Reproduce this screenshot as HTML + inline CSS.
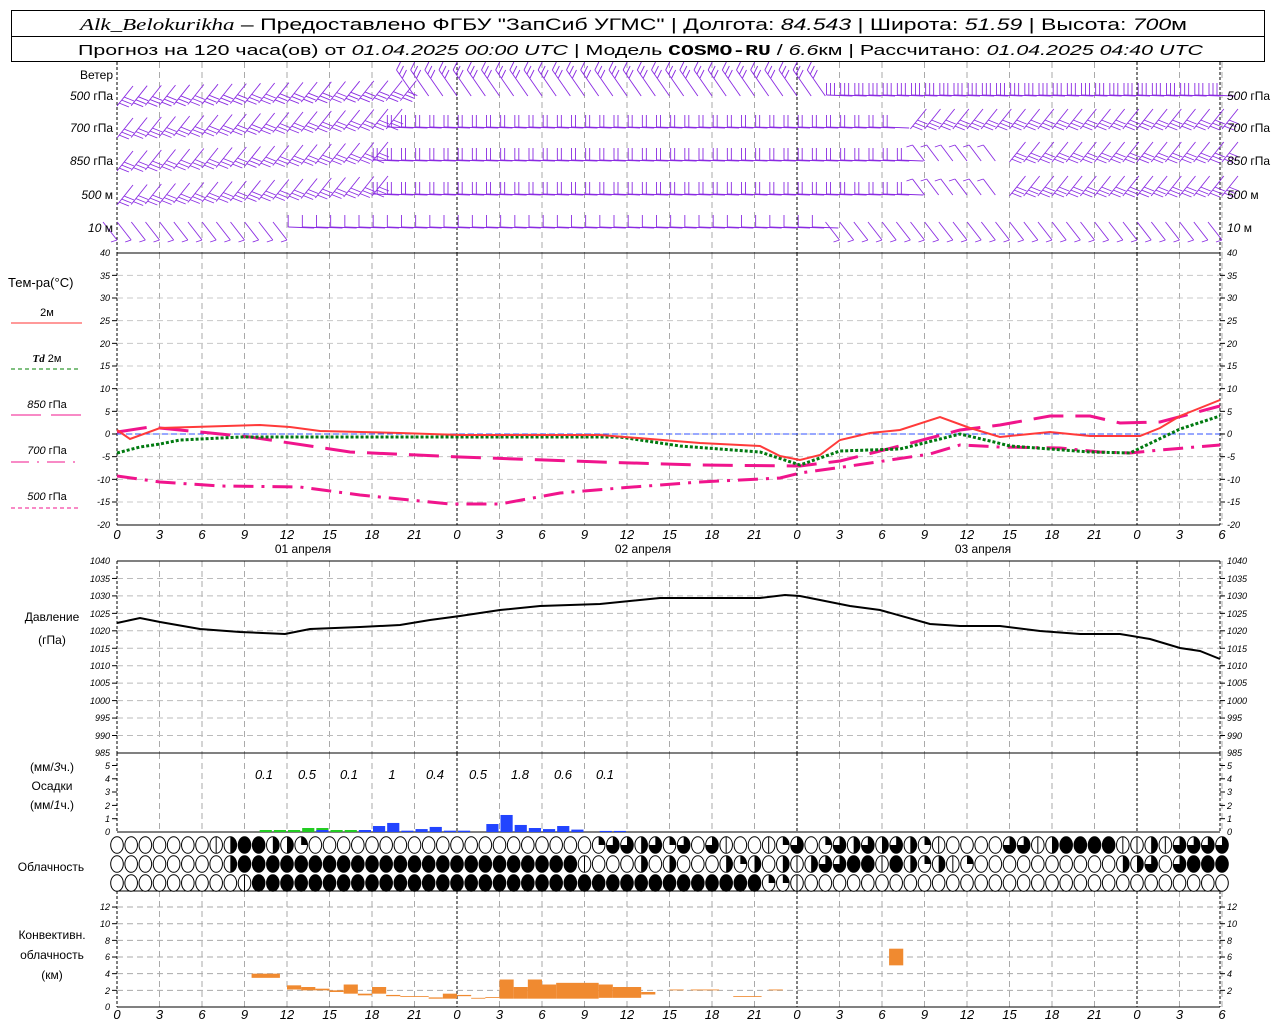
<!DOCTYPE html>
<html><head><meta charset="utf-8">
<style>
html,body{margin:0;padding:0;background:#fff;}
svg{display:block;font-family:"Liberation Sans","DejaVu Sans",sans-serif;}
.ax{font-size:9px;font-style:italic;fill:#000;}
.lb{font-size:12px;fill:#000;}
.xl{font-size:13px;font-style:italic;fill:#000;}
</style></head><body>
<svg id="s" width="1280" height="1024" viewBox="0 0 1280 1024" xmlns="http://www.w3.org/2000/svg">
<rect x="0" y="0" width="1280" height="1024" fill="#fff"/>
<g id="grid"></g>
<g id="wind" stroke="#8a2be2" stroke-width="0.9" fill="none"></g>
<!-- header -->
<rect x="11.5" y="10.5" width="1253" height="51" fill="none" stroke="#000"/>
<line x1="11" y1="36.5" x2="1265" y2="36.5" stroke="#000"/>
<text x="80" y="30" font-size="17" textLength="1107" lengthAdjust="spacingAndGlyphs"><tspan font-family="Liberation Serif" font-style="italic">Alk_Belokurikha</tspan> – Предоставлено ФГБУ "ЗапСиб УГМС" | Долгота: <tspan font-style="italic">84.543</tspan> | Широта: <tspan font-style="italic">51.59</tspan> | Высота: <tspan font-style="italic">700</tspan>м</text>
<text x="78" y="55" font-size="15" textLength="1125" lengthAdjust="spacingAndGlyphs">Прогноз на 120 часа(ов) от <tspan font-style="italic">01.04.2025 00:00 UTC</tspan> | Модель <tspan font-family="Liberation Mono" font-weight="bold">COSMO-RU</tspan> / <tspan font-style="italic">6.6</tspan>км | Рассчитано: <tspan font-style="italic">01.04.2025 04:40 UTC</tspan></text>

<!-- wind labels -->
<g class="lb" font-size="11">
<text x="113" y="79" text-anchor="end">Ветер</text>
<text x="113" y="100" text-anchor="end"><tspan font-style="italic">500</tspan> гПа</text>
<text x="113" y="132" text-anchor="end"><tspan font-style="italic">700</tspan> гПа</text>
<text x="113" y="165" text-anchor="end"><tspan font-style="italic">850</tspan> гПа</text>
<text x="113" y="199" text-anchor="end"><tspan font-style="italic">500</tspan> м</text>
<text x="113" y="232" text-anchor="end"><tspan font-style="italic">10</tspan>   м</text>
<text x="1227" y="100"><tspan font-style="italic">500</tspan> гПа</text>
<text x="1227" y="132"><tspan font-style="italic">700</tspan> гПа</text>
<text x="1227" y="165"><tspan font-style="italic">850</tspan> гПа</text>
<text x="1227" y="199"><tspan font-style="italic">500</tspan> м</text>
<text x="1227" y="232"><tspan font-style="italic">10</tspan>   м</text>
</g>

<!-- temp legend -->
<g class="lb">
<text x="8" y="287" font-size="13">Тем-ра(°C)</text>
<text x="47" y="316" text-anchor="middle" font-size="11">2м</text>
<line x1="11" y1="323" x2="82" y2="323" stroke="#ff3333" stroke-width="1"/>
<text x="47" y="362" text-anchor="middle" font-size="11"><tspan font-family="Liberation Serif" font-style="italic" font-weight="bold">Td</tspan>  2м</text>
<line x1="11" y1="369" x2="78" y2="369" stroke="#008000" stroke-dasharray="4,3"/>
<text x="47" y="408" text-anchor="middle" font-size="11"><tspan font-style="italic">850</tspan> гПа</text>
<line x1="11" y1="415" x2="82" y2="415" stroke="#f0148c" stroke-dasharray="30,10"/>
<text x="47" y="454" text-anchor="middle" font-size="11"><tspan font-style="italic">700</tspan> гПа</text>
<line x1="11" y1="462" x2="78" y2="462" stroke="#f0148c" stroke-dasharray="18,8,2,8"/>
<text x="47" y="500" text-anchor="middle" font-size="11"><tspan font-style="italic">500</tspan> гПа</text>
<line x1="11" y1="508" x2="78" y2="508" stroke="#f0148c" stroke-dasharray="4,3"/>
<text x="52" y="621" text-anchor="middle">Давление</text>
<text x="52" y="644" text-anchor="middle">(гПа)</text>
<text x="52" y="771" text-anchor="middle">(мм/<tspan font-style="italic">3</tspan>ч.)</text>
<text x="52" y="790" text-anchor="middle">Осадки</text>
<text x="52" y="809" text-anchor="middle">(мм/<tspan font-style="italic">1</tspan>ч.)</text>
<text x="51" y="871" text-anchor="middle">Облачность</text>
<text x="52" y="939" text-anchor="middle">Конвективн.</text>
<text x="52" y="959" text-anchor="middle">облачность</text>
<text x="52" y="979" text-anchor="middle">(км)</text>
</g>

<!-- axis labels -->
<g class="ax" text-anchor="end">
<text x="110" y="256">40</text><text x="110" y="279">35</text><text x="110" y="301">30</text><text x="110" y="324">25</text><text x="110" y="347">20</text><text x="110" y="369">15</text><text x="110" y="392">10</text><text x="110" y="415">5</text><text x="110" y="437">0</text><text x="110" y="460">-5</text><text x="110" y="483">-10</text><text x="110" y="505">-15</text><text x="110" y="528">-20</text>
<text x="110" y="564">1040</text><text x="110" y="582">1035</text><text x="110" y="599">1030</text><text x="110" y="617">1025</text><text x="110" y="634">1020</text><text x="110" y="652">1015</text><text x="110" y="669">1010</text><text x="110" y="686">1005</text><text x="110" y="704">1000</text><text x="110" y="721">995</text><text x="110" y="739">990</text><text x="110" y="756">985</text>
<text x="110" y="769">5</text><text x="110" y="782">4</text><text x="110" y="795">3</text><text x="110" y="809">2</text><text x="110" y="822">1</text><text x="110" y="835">0</text>
<text x="110" y="910">12</text><text x="110" y="927">10</text><text x="110" y="944">8</text><text x="110" y="960">6</text><text x="110" y="977">4</text><text x="110" y="994">2</text><text x="110" y="1010">0</text>
</g>
<g class="ax">
<text x="1227" y="256">40</text><text x="1227" y="279">35</text><text x="1227" y="301">30</text><text x="1227" y="324">25</text><text x="1227" y="347">20</text><text x="1227" y="369">15</text><text x="1227" y="392">10</text><text x="1227" y="415">5</text><text x="1227" y="437">0</text><text x="1227" y="460">-5</text><text x="1227" y="483">-10</text><text x="1227" y="505">-15</text><text x="1227" y="528">-20</text>
<text x="1227" y="564">1040</text><text x="1227" y="582">1035</text><text x="1227" y="599">1030</text><text x="1227" y="617">1025</text><text x="1227" y="634">1020</text><text x="1227" y="652">1015</text><text x="1227" y="669">1010</text><text x="1227" y="686">1005</text><text x="1227" y="704">1000</text><text x="1227" y="721">995</text><text x="1227" y="739">990</text><text x="1227" y="756">985</text>
<text x="1227" y="769">5</text><text x="1227" y="782">4</text><text x="1227" y="795">3</text><text x="1227" y="809">2</text><text x="1227" y="822">1</text><text x="1227" y="835">0</text>
<text x="1227" y="910">12</text><text x="1227" y="927">10</text><text x="1227" y="944">8</text><text x="1227" y="960">6</text><text x="1227" y="977">4</text><text x="1227" y="994">2</text>
</g>

<!-- x labels -->
<g class="xl" text-anchor="middle">
<text y="539"><tspan x="117">0</tspan><tspan x="159.5">3</tspan><tspan x="202">6</tspan><tspan x="244.5">9</tspan><tspan x="287">12</tspan><tspan x="329.5">15</tspan><tspan x="372">18</tspan><tspan x="414.5">21</tspan><tspan x="457">0</tspan><tspan x="499.5">3</tspan><tspan x="542">6</tspan><tspan x="584.5">9</tspan><tspan x="627">12</tspan><tspan x="669.5">15</tspan><tspan x="712">18</tspan><tspan x="754.5">21</tspan><tspan x="797">0</tspan><tspan x="839.5">3</tspan><tspan x="882">6</tspan><tspan x="924.5">9</tspan><tspan x="967">12</tspan><tspan x="1009.5">15</tspan><tspan x="1052">18</tspan><tspan x="1094.5">21</tspan><tspan x="1137">0</tspan><tspan x="1179.5">3</tspan><tspan x="1222">6</tspan></text>
<text y="1019"><tspan x="117">0</tspan><tspan x="159.5">3</tspan><tspan x="202">6</tspan><tspan x="244.5">9</tspan><tspan x="287">12</tspan><tspan x="329.5">15</tspan><tspan x="372">18</tspan><tspan x="414.5">21</tspan><tspan x="457">0</tspan><tspan x="499.5">3</tspan><tspan x="542">6</tspan><tspan x="584.5">9</tspan><tspan x="627">12</tspan><tspan x="669.5">15</tspan><tspan x="712">18</tspan><tspan x="754.5">21</tspan><tspan x="797">0</tspan><tspan x="839.5">3</tspan><tspan x="882">6</tspan><tspan x="924.5">9</tspan><tspan x="967">12</tspan><tspan x="1009.5">15</tspan><tspan x="1052">18</tspan><tspan x="1094.5">21</tspan><tspan x="1137">0</tspan><tspan x="1179.5">3</tspan><tspan x="1222">6</tspan></text>
</g>
<g class="lb" text-anchor="middle">
<text x="303" y="553">01 апреля</text><text x="643" y="553">02 апреля</text><text x="983" y="553">03 апреля</text>
</g>
<!-- precip numbers -->
<g font-size="13" font-style="italic" text-anchor="middle">
<text x="264" y="779">0.1</text><text x="307" y="779">0.5</text><text x="349" y="779">0.1</text><text x="392" y="779">1</text><text x="435" y="779">0.4</text><text x="478" y="779">0.5</text><text x="520" y="779">1.8</text><text x="563" y="779">0.6</text><text x="605" y="779">0.1</text>
</g>

<!-- temperature curves -->
<line x1="117" y1="434" x2="1220" y2="434" stroke="#3050ff" stroke-width="1" stroke-dasharray="6,3"/>
<polyline fill="none" stroke="#f0148c" stroke-width="3" stroke-dasharray="20,8,3,8" points="117,476 160,482 220,486 300,487 360,495 450,504 500,504 560,493 620,488 700,482 780,478 800,473 850,466 930,454 960,445 1000,447 1060,448 1100,452 1130,453 1160,450 1220,445"/>
<polyline fill="none" stroke="#f0148c" stroke-width="3" stroke-dasharray="30,12" points="117,432 150,427 250,437 350,452 460,457 600,462 700,465 800,466 840,461 880,451 930,438 960,430 1000,425 1050,416 1090,416 1120,423 1160,422 1220,406"/>
<polyline fill="none" stroke="#007a10" stroke-width="3" stroke-dasharray="3,2" points="117,453 140,447 160,444 180,440 240,437 460,437 620,437 680,446 760,452 800,465 840,451 900,449 960,434 990,441 1010,446 1090,452 1130,453 1180,429 1220,416"/>
<polyline fill="none" stroke="#ff3a3a" stroke-width="2" points="117,430 130,439 160,428 260,425 290,427 320,431 400,433 460,435 600,435 700,443 760,446 780,456 800,460 820,455 840,440 870,433 900,430 940,417 970,428 1000,437 1050,432 1090,436 1140,436 1160,428 1180,416 1220,400"/>
<!-- pressure -->
<polyline fill="none" stroke="#000" stroke-width="2" points="117,623 140,618 160,622 200,629 240,632 285,634 310,629 360,627 400,625 430,620 460,616 500,610 540,606 600,604 660,598 700,598 760,598 785,595 800,596 850,606 880,610 930,624 960,626 1000,626 1040,631 1080,634 1120,634 1150,639 1180,648 1200,651 1220,659"/>
<g id="bars"></g>
<g id="clouds"></g>
</svg>
<script>
(function(){
var NS="http://www.w3.org/2000/svg";
function el(p,t,a){var e=document.createElementNS(NS,t);for(var k in a)e.setAttribute(k,a[k]);p.appendChild(e);return e;}
var g=document.getElementById('grid');
var X=function(h){return 117+h*340/24;};
var panels=[[62,253],[253,525],[561,753],[753,832],[891,1007]];
for(var i=0;i<=26;i++){var x=X(i*3);var day=(i%8==0);
 panels.forEach(function(p){el(g,'line',{x1:x,y1:p[0],x2:x,y2:p[1],stroke:day?'#000':'#aaa','stroke-dasharray':day?'3,2':'6,4','stroke-width':1});});}
panels.forEach(function(p){el(g,'line',{x1:1220,y1:p[0],x2:1220,y2:p[1],stroke:'#000','stroke-dasharray':'3,2'});});
function hg(ys,c){ys.forEach(function(y){el(g,'line',{x1:117,y1:y,x2:1220,y2:y,stroke:c,'stroke-dasharray':'6,4'});
 el(g,'line',{x1:112,y1:y,x2:117,y2:y,stroke:'#000'});el(g,'line',{x1:1220,y1:y,x2:1225,y2:y,stroke:'#000'});});}
var t=[];for(var v=35;v>=-15;v-=5)t.push(434-v*4.533);hg(t,'#c8c8c8');
var pr=[];for(var p=1035;p>=990;p-=5)pr.push(561+(1040-p)*3.49);hg(pr,'#bbb');
var cv=[];for(var k=2;k<=12;k+=2)cv.push(1007-k*8.33);hg(cv,'#aaa');
[765.5,778.8,792,805.4,818.7].forEach(function(y){el(g,'line',{x1:112,y1:y,x2:117,y2:y,stroke:'#000'});el(g,'line',{x1:1220,y1:y,x2:1225,y2:y,stroke:'#000'});});
[253,525,561,753,832,891,1007].forEach(function(y){el(g,'line',{x1:117,y1:y,x2:1220,y2:y,stroke:'#000','stroke-width':1});});
var b=document.getElementById('bars');
var pb={10:[.15,0],11:[.15,0],12:[.15,0],13:[.3,0],14:[.3,.15],15:[.15,0],16:[.15,0],17:[0,.15],18:[0,.45],19:[0,.68],20:[0,.1],21:[0,.22],22:[0,.38],23:[0,.1],24:[0,.1],26:[0,.6],27:[0,1.28],28:[0,.53],29:[0,.3],30:[0,.22],31:[0,.45],32:[0,.18],34:[0,.08],35:[0,.08]};
for(var h in pb){var x0=X(+h)+1,w=340/24-2;var gr=pb[h][0],bl=pb[h][1];
 if(gr>0)el(b,'rect',{x:x0,y:832-gr*13.3,width:w,height:gr*13.3,fill:'#22cc22'});
 if(bl>0)el(b,'rect',{x:x0,y:832-bl*13.3,width:w,height:bl*13.3,fill:'#2244ff'});}
var cb=[[9.5,11.5,3.5,4],[12,13,2.1,2.6],[13,14,2,2.4],[14,15,2,2.2],[15,16,1.8,2],[16,17,1.6,2.7],[17,18,1.4,1.6],[18,19,1.6,2.4],[19,20,1.3,1.45],[20,22,1.2,1.3],[22,23,1,1.15],[23,24,1,1.6],[24,25,1.3,1.45],[25,26,1,1.1],[26,27,1.1,1.2],[27,28,1,3.3],[28,29,1,2.4],[29,30,1,3.3],[30,31,1,2.7],[31,34,1,2.9],[34,35,1.1,2.7],[35,37,1.1,2.4],[37,38,1.5,1.8],[39,40,2,2.1],[40.5,42.5,2,2.1],[43.5,45.5,1.2,1.3],[46,47,2,2.1],[54.5,55.5,5,7]];
cb.forEach(function(c){el(b,'rect',{x:X(c[0]),y:1007-c[3]*8.33,width:X(c[1])-X(c[0]),height:(c[3]-c[2])*8.33,fill:'#f08a30'});});
var rows=[
 "ooooooolhffhhq"+"ooooooooooooooooooo"+"oqtthtqtotloolqtoqthththqloooottlhffffllhlttttttt",
 "oooooooohffffffffffffffffffffffff"+"looohohooohqhohlhttfflfhqhlqoooooooooohhtotffff",
 "ooooooooolffffffffffffffffffffffffffffffffffffqqloooooooooooooooooooooooooooooo"];
var cg=document.getElementById('clouds');var cy=[845,864,883];
rows.forEach(function(r,ri){for(var h=0;h<=78;h++){var c=r.charAt(h)||'o';var x=X(h),y=cy[ri],rx=6.3,ry=8.3;
 el(cg,'ellipse',{cx:x,cy:y,rx:rx,ry:ry,fill:c=='f'?'#000':'#fff',stroke:'#000','stroke-width':1});
 if(c=='l')el(cg,'line',{x1:x,y1:y-ry,x2:x,y2:y+ry,stroke:'#000'});
 if(c=='h')el(cg,'path',{d:'M'+x+','+(y-ry)+' A'+rx+','+ry+' 0 0 1 '+x+','+(y+ry)+'Z',fill:'#000'});
 if(c=='q')el(cg,'path',{d:'M'+x+','+y+' L'+x+','+(y-ry)+' A'+rx+','+ry+' 0 0 1 '+(x+rx)+','+y+'Z',fill:'#000'});
 if(c=='t')el(cg,'path',{d:'M'+x+','+y+' L'+x+','+(y-ry)+' A'+rx+','+ry+' 0 1 1 '+(x-rx)+','+y+'Z',fill:'#000'});
}});
var wg=document.getElementById('wind');
function seg(x1,y1,x2,y2){el(wg,'line',{x1:x1,y1:y1,x2:x2,y2:y2});}
function barb(type,x,y,n){
 if(type=='A'){seg(x,y,x+16,y-20);for(var i=0;i<n;i++){seg(x+2+i*2.5,y-3-i*3,x+12+i*2.5,y+1-i*3);}}
 else if(type=='H'){seg(x,y,x-26,y-1);for(var i=0;i<n;i++){seg(x-26+i*4,y-1,x-26+i*4,y-13);}}
 else if(type=='D'){seg(x,y,x-18,y-26);for(var i=0;i<n;i++){seg(x-18+i*3,y-26+i*4,x-14+i*3,y-34+i*4);}}
 else if(type=='S'){seg(x,y,x-14,y-18);seg(x,y,x-6,y+2);}
 else if(type=='B'){seg(x,y,x-12,y-16);seg(x-12,y-16,x-18,y-14);}
}
var W=[
 [96,[[0,20,'A',3],[21,50,'D',3],[51,78,'H',3]]],
 [128,[[0,19,'A',3],[20,55,'H',2],[56,78,'A',3]]],
 [161,[[0,18,'A',3],[19,56,'H',2],[57,62,'B',1],[63,78,'A',3]]],
 [195,[[0,18,'A',3],[19,56,'H',2],[57,62,'B',1],[63,78,'A',3]]],
 [240,[[0,12,'S',1],[13,50,'H',1],[51,78,'S',1]]]];
W.forEach(function(r){r[1].forEach(function(s){for(var h=s[0];h<=s[1];h++){var x=X(h);var y=r[0];
 if(s[2]=='A')y=r[0]+10-Math.min(h,18)*0.5*(r[0]>100?1:0.6);
 if(s[2]=='H'&&r[0]==240)y=228;
 barb(s[2],x+(s[2]=='H'?13:0),y,s[3]);}});});
})();
</script>
</body></html>
